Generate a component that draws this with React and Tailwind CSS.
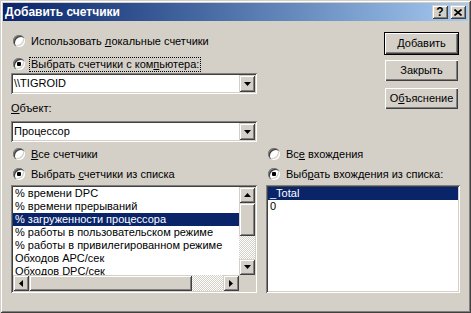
const raised = "shadow-[inset_1px_1px_#fff,inset_-1px_-1px_#404040,inset_-2px_-2px_#808080]";
const scrollBtn = "bg-[#d4d0c8] shadow-[inset_1px_1px_#d4d0c8,inset_-1px_-1px_#404040,inset_2px_2px_#fff,inset_-2px_-2px_#808080]";
const sunken = "shadow-[inset_1px_1px_#808080,inset_-1px_-1px_#fff,inset_2px_2px_#404040,inset_-2px_-2px_#d4d0c8]";
const checker = "bg-[conic-gradient(#fff_25%,#d4d0c8_0_50%,#fff_0_75%,#d4d0c8_0)] bg-[length:2px_2px]";

function Arrow({ dir }) {
  const shapes = {
    down: "M0 0h7l-3.5 4z",
    up: "M0 4h7L3.5 0z",
    left: "M4 0v7L0 3.5z",
    right: "M0 0v7l4-3.5z",
  };
  const vertical = dir === "up" || dir === "down";
  return (
    <svg width={vertical ? 7 : 4} height={vertical ? 4 : 7} viewBox={vertical ? "0 0 7 4" : "0 0 4 7"}>
      <path d={shapes[dir]} fill="#000" />
    </svg>
  );
}

function Radio({ checked }) {
  return (
    <span className="w-3 h-3 shrink-0 rounded-full bg-white flex items-center justify-center shadow-[inset_1px_1px_#808080,inset_2px_2px_#404040,inset_-1px_-1px_#fff,inset_-2px_-2px_#d4d0c8]">
      {checked && <span className="w-1 h-1 rounded-[1px] bg-black" />}
    </span>
  );
}

function RadioRow({ checked, children, focus }) {
  return (
    <div className="h-4 flex items-center gap-[4px] pl-[2px]">
      <Radio checked={checked} />
      <span className={focus ? "border border-dotted border-black px-[1px] h-[15px] leading-[13px]" : "pl-[2px] leading-[13px]"}>
        {children}
      </span>
    </div>
  );
}

function Combo({ value }) {
  return (
    <div className={`w-[246px] h-[21px] p-[2px] bg-white flex ${sunken}`}>
      <div className="flex-1 flex items-center pl-[1px] leading-none">{value}</div>
      <div className={`w-4 h-[17px] flex items-center justify-center ${scrollBtn}`}>
        <Arrow dir="down" />
      </div>
    </div>
  );
}

function PushButton({ children, isDefault }) {
  return (
    <div className={isDefault ? "border border-black" : "border border-transparent"}>
      <div className={`h-[21px] flex items-center justify-center bg-[#d4d0c8] ${raised}`}>{children}</div>
    </div>
  );
}

const counters = [
  "% времени DPC",
  "% времени прерываний",
  "% загруженности процессора",
  "% работы в пользовательском режиме",
  "% работы в привилегированном режиме",
  "Обходов APC/сек",
  "Обходов DPC/сек",
];

function ListRow({ text, selected }) {
  return (
    <div className={selected ? "h-[13px] leading-[13px] pl-[2px] whitespace-nowrap bg-[#0a246a] text-white" : "h-[13px] leading-[13px] pl-[2px] whitespace-nowrap"}>
      {text}
    </div>
  );
}

export default function App() {
  return (
    <div
      className="w-[471px] h-[313px] bg-[#d4d0c8] p-[3px] flex flex-col text-[11px] text-black overflow-hidden shadow-[inset_1px_1px_#d4d0c8,inset_-1px_-1px_#404040,inset_2px_2px_#fff,inset_-2px_-2px_#808080]"
      style={{ fontFamily: '"Liberation Sans", Arial, sans-serif' }}
    >
      {/* title bar */}
      <div className="h-[18px] flex items-center pl-[2px] pr-[2px] bg-linear-to-r from-[#0a246a] to-[#a6caf0]">
        <span className="text-white font-bold text-[12px] leading-none">Добавить счетчики</span>
        <div className="ml-auto flex gap-[2px]">
          <div className={`w-4 h-[14px] bg-[#d4d0c8] flex items-center justify-center font-bold text-[12px] leading-none ${scrollBtn}`}>?</div>
          <div className={`w-4 h-[14px] bg-[#d4d0c8] flex items-center justify-center ${scrollBtn}`}>
            <svg width="8" height="7" viewBox="0 0 8 7">
              <path d="M0.5 0.5L7.5 6.5M7.5 0.5L0.5 6.5" stroke="#000" strokeWidth="1.6" />
            </svg>
          </div>
        </div>
      </div>

      <div className="flex-1 flex flex-col pl-[8px] pr-[8px]">
        {/* top section */}
        <div className="flex items-start">
          <div className="w-[246px] flex flex-col">
            <div className="mt-[12px]">
              <RadioRow>
                Использовать <u>л</u>окальные счетчики
              </RadioRow>
            </div>
            <div className="mt-[7px]">
              <RadioRow checked focus>
                Выбрать счетчики с ком<u>п</u>ьютера:
              </RadioRow>
            </div>
            <div className="mt-[1px]">
              <Combo value="\\TIGROID" />
            </div>
            <div className="mt-[7px] h-[14px] leading-[14px]">
              <u>О</u>бъект:
            </div>
            <div className="mt-[6px]">
              <Combo value="Процессор" />
            </div>
          </div>
          <div className="ml-auto mr-[1px] mt-[11px] w-[75px] flex flex-col">
            <PushButton isDefault>Добавить</PushButton>
            <div className="mt-[4px]">
              <PushButton>Закрыть</PushButton>
            </div>
            <div className="mt-[5px]">
              <PushButton>
                О<u>б</u>ъяснение
              </PushButton>
            </div>
          </div>
        </div>

        {/* lower section */}
        <div className="mt-[4px] flex">
          <div className="w-[246px] flex flex-col">
            <RadioRow>
              <u>В</u>се счетчики
            </RadioRow>
            <div className="mt-[4px]">
              <RadioRow checked>
                Выбрать <u>с</u>четчики из списка
              </RadioRow>
            </div>
            <div className={`mt-[3px] h-[108px] p-[2px] bg-white flex flex-col ${sunken}`}>
              <div className="flex flex-1 min-h-0">
                <div className="flex-1 overflow-hidden">
                  {counters.map((c) => (
                    <ListRow key={c} text={c} selected={c === "% загруженности процессора"} />
                  ))}
                </div>
                <div className="w-4 flex flex-col">
                  <div className={`h-4 flex items-center justify-center ${scrollBtn}`}>
                    <Arrow dir="up" />
                  </div>
                  <div className={`h-[33px] ${scrollBtn}`} />
                  <div className={`flex-1 ${checker}`} />
                  <div className={`h-4 flex items-center justify-center ${scrollBtn}`}>
                    <Arrow dir="down" />
                  </div>
                </div>
              </div>
              <div className="h-4 flex">
                <div className={`w-4 flex items-center justify-center ${scrollBtn}`}>
                  <Arrow dir="left" />
                </div>
                <div className={`w-[163px] ${scrollBtn}`} />
                <div className={`flex-1 ${checker}`} />
                <div className={`w-4 flex items-center justify-center ${scrollBtn}`}>
                  <Arrow dir="right" />
                </div>
                <div className="w-4 bg-[#d4d0c8]" />
              </div>
            </div>
          </div>

          <div className="ml-[9px] w-[194px] flex flex-col">
            <RadioRow>
              Вс<u>е</u> вхождения
            </RadioRow>
            <div className="mt-[4px]">
              <RadioRow checked>
                Выб<u>р</u>ать вхождения из списка:
              </RadioRow>
            </div>
            <div className={`mt-[3px] h-[108px] p-[2px] bg-white ${sunken}`}>
              <ListRow text="_Total" selected />
              <ListRow text="0" />
            </div>
          </div>
        </div>
      </div>
    </div>
  );
}
